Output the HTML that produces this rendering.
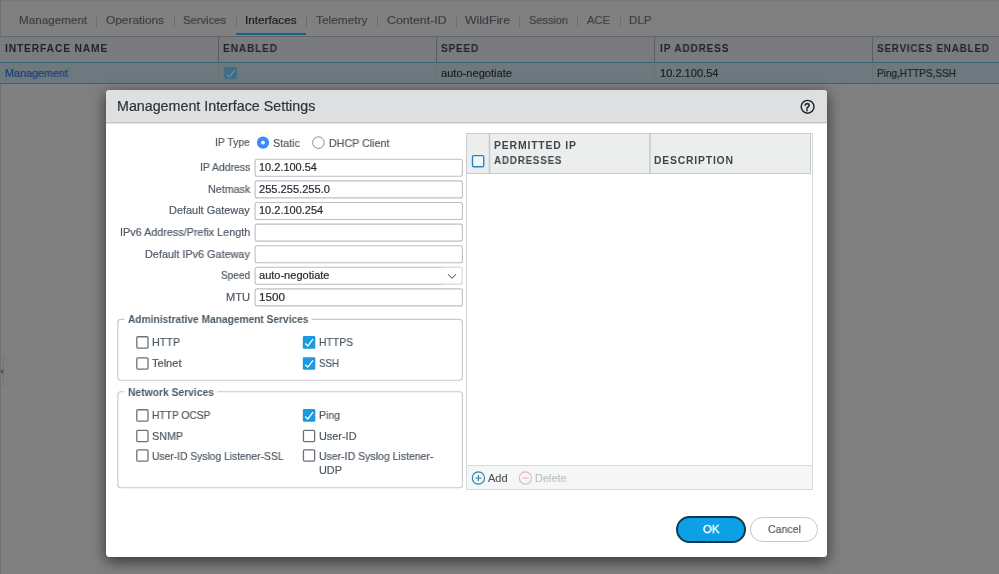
<!DOCTYPE html>
<html lang="en"><head><meta charset="utf-8"><title>Management Interface Settings</title>
<style>
html,body{margin:0;padding:0}
body{width:999px;height:574px;overflow:hidden;position:relative;background:#808080;font-family:"Liberation Sans",sans-serif;font-size:11px}
.a{position:absolute;box-sizing:border-box}
.t{position:absolute;white-space:pre;transform-origin:0 50%;display:block;will-change:transform}
.topline{left:0;top:0;width:999px;height:2px;background:linear-gradient(#787878 0,#787878 1px,#7e7e7e 1px,#7e7e7e 2px)}
.leftline{left:0;top:0;width:1px;height:574px;background:#707272}
.handle{left:1px;top:356px;width:3px;height:31px;background:#7e7e7e;border:1px solid #767878;border-left:0}
.sep{top:15.5px;width:1px;height:11px;background:#6a6d71}
.tabul{left:236px;top:32.5px;width:69.5px;height:2px;background:#17618b}
.thead{left:0;top:36px;width:999px;height:26px;background:#797b7d;border-top:1px solid #616569}
.vline{top:37px;width:1px;height:25px;background:#5b5f62}
.trow{left:0;top:62px;width:999px;height:22px;background:#6d797f;border-top:1px solid #3a657d;border-bottom:1px solid #3a657d}
.rline{top:63px;width:1px;height:20px;background:#687378}
.dlg{left:106px;top:90px;width:720.6px;height:466.6px;background:#fff;border-radius:3.5px;box-shadow:0 4px 14px 1px rgba(0,0,0,.55)}
.dhead{left:0;top:0;width:100%;height:32.5px;background:#dddfe1;border-radius:3.5px 3.5px 0 0}
.grid{left:466px;top:132.5px;width:347px;height:357px;border:1px solid #d6d9db;background:#fff}
.ghead{left:466px;top:132.5px;width:345px;height:41px;background:#eceeee;border:1px solid #c9cccd}
.gfoot{left:467px;top:465px;width:345px;height:23.5px;background:#f5f7f7;border-top:1px solid #d6d9db}
.ok{left:676.2px;top:516.2px;width:69.7px;height:26.8px;border-radius:14px;background:#0ea0e6;border:2px solid #0e3a52}
.cancel{left:750px;top:517.4px;width:67.8px;height:24.4px;border-radius:13px;background:#fff;border:1px solid #c4c8cb}

</style></head>
<body>
<div class="a topline"></div>
<div class="a leftline"></div>
<div class="a sep" style="left:96.0px"></div>
<div class="a sep" style="left:173.5px"></div>
<div class="a sep" style="left:236.3px"></div>
<div class="a sep" style="left:305.9px"></div>
<div class="a sep" style="left:377.0px"></div>
<div class="a sep" style="left:455.9px"></div>
<div class="a sep" style="left:518.8px"></div>
<div class="a sep" style="left:577.1px"></div>
<div class="a sep" style="left:619.5px"></div>
<div class="a tabul"></div>
<div class="a thead"></div>
<div class="a vline" style="left:218px"></div>
<div class="a vline" style="left:436px"></div>
<div class="a vline" style="left:654px"></div>
<div class="a vline" style="left:872px"></div>
<div class="a trow"></div>
<div class="a rline" style="left:218px"></div>
<div class="a rline" style="left:436px"></div>
<div class="a rline" style="left:654px"></div>
<div class="a rline" style="left:872px"></div>
<div class="a handle"></div>
<div class="a dlg"><div class="a dhead"></div></div>
<div class="a grid"></div>
<div class="a ghead"></div>
<div class="a gfoot"></div>
<div class="a ok"></div>
<div class="a cancel"></div>
<svg class="a" style="left:0;top:0" width="999" height="574" viewBox="0 0 999 574">
<path d="M0.3 371.5 L3.2 369 L3.2 374 Z" fill="#4f4f4f"/>
<rect x="224.3" y="66.9" width="12.6" height="12.4" rx="1.3" fill="#3e6d85"/>
<path d="M227 74.6 L229.5 76.9 L234.9 69.9" fill="none" stroke="#7f9fae" stroke-width="1"/>
<rect x="106" y="122.1" width="720.6" height="1.4" fill="#c2c5c8"/>
<circle cx="807.6" cy="106.8" r="6.4" fill="none" stroke="#1d1f22" stroke-width="1.4"/>
<circle cx="263" cy="142.6" r="6.1" fill="#3b8cf5"/><circle cx="263" cy="142.6" r="1.9" fill="#fff"/>
<circle cx="318.4" cy="142.6" r="5.8" fill="#fff" stroke="#8c8c8c" stroke-width="1"/>
<rect x="255.1" y="159.30" width="207.3" height="17" rx="2" fill="#fff" stroke="#bbbfc3" stroke-width="1.1"/>
<rect x="255.1" y="180.90" width="207.3" height="17" rx="2" fill="#fff" stroke="#bbbfc3" stroke-width="1.1"/>
<rect x="255.1" y="202.50" width="207.3" height="17" rx="2" fill="#fff" stroke="#bbbfc3" stroke-width="1.1"/>
<rect x="255.1" y="224.10" width="207.3" height="17" rx="2" fill="#fff" stroke="#bbbfc3" stroke-width="1.1"/>
<rect x="255.1" y="245.70" width="207.3" height="17" rx="2" fill="#fff" stroke="#bbbfc3" stroke-width="1.1"/>
<rect x="255.1" y="267.30" width="207.3" height="17" rx="2" fill="#fff" stroke="#bbbfc3" stroke-width="1.1"/>
<rect x="255.1" y="288.90" width="207.3" height="17" rx="2" fill="#fff" stroke="#bbbfc3" stroke-width="1.1"/>
<path d="M444.5 267.3 H460.4 Q462.4 267.3 462.4 269.3 V282.3 Q462.4 284.3 460.4 284.3 H444.5" fill="none" stroke="#dfe2e4" stroke-width="1.3"/>
<path d="M447.9 274.1 L451.9 278.2 L456 274.1" fill="none" stroke="#747d84" stroke-width="1.05"/>
<path d="M124.5 319.4 H120.8 Q117.8 319.4 117.8 322.4 V377.2 Q117.8 380.2 120.8 380.2 H459.4 Q462.4 380.2 462.4 377.2 V322.4 Q462.4 319.4 459.4 319.4 H311.5" fill="none" stroke="#c6cacd" stroke-width="1.1"/>
<path d="M124.5 391.7 H120.8 Q117.8 391.7 117.8 394.7 V484.8 Q117.8 487.8 120.8 487.8 H459.4 Q462.4 487.8 462.4 484.8 V394.7 Q462.4 391.7 459.4 391.7 H217" fill="none" stroke="#c6cacd" stroke-width="1.1"/>
<rect x="136.8" y="336.75" width="11.2" height="11.3" rx="1.1" fill="#fff" stroke="#6b727b" stroke-width="1.3"/>
<rect x="136.8" y="357.84999999999997" width="11.2" height="11.3" rx="1.1" fill="#fff" stroke="#6b727b" stroke-width="1.3"/>
<rect x="302.8" y="336.1" width="12.5" height="12.6" rx="1.3" fill="#1a9ae0"/>
<path d="M305.24 343.60 L307.85 346.00 L313.00 339.20" fill="none" stroke="#fff" stroke-width="1.3"/>
<rect x="302.8" y="357.2" width="12.5" height="12.6" rx="1.3" fill="#1a9ae0"/>
<path d="M305.24 364.70 L307.85 367.10 L313.00 360.30" fill="none" stroke="#fff" stroke-width="1.3"/>
<rect x="136.8" y="409.75" width="11.2" height="11.3" rx="1.1" fill="#fff" stroke="#6b727b" stroke-width="1.3"/>
<rect x="136.8" y="430.34999999999997" width="11.2" height="11.3" rx="1.1" fill="#fff" stroke="#6b727b" stroke-width="1.3"/>
<rect x="136.8" y="449.84999999999997" width="11.2" height="11.3" rx="1.1" fill="#fff" stroke="#6b727b" stroke-width="1.3"/>
<rect x="302.8" y="409.1" width="12.5" height="12.6" rx="1.3" fill="#1a9ae0"/>
<path d="M305.24 416.60 L307.85 419.00 L313.00 412.20" fill="none" stroke="#fff" stroke-width="1.3"/>
<rect x="303.45" y="430.34999999999997" width="11.2" height="11.3" rx="1.1" fill="#fff" stroke="#6b727b" stroke-width="1.3"/>
<rect x="303.45" y="449.84999999999997" width="11.2" height="11.3" rx="1.1" fill="#fff" stroke="#6b727b" stroke-width="1.3"/>
<rect x="488.8" y="133.5" width="1.4" height="39.5" fill="#c4c7c9"/>
<rect x="649.3" y="133.5" width="1.4" height="39.5" fill="#c4c7c9"/>
<rect x="472.5" y="155.6" width="11.2" height="11.2" rx="1.3" fill="#f3f6f7" stroke="#2387bd" stroke-width="1.4"/>
<circle cx="478.4" cy="478" r="6.1" fill="none" stroke="#2a7fa8" stroke-width="1.1"/><path d="M478.4 474.9 V481.1 M475.3 478 H481.5" stroke="#2a7fa8" stroke-width="1.1" fill="none"/>
<circle cx="525.4" cy="478" r="6.1" fill="none" stroke="#eab3b3" stroke-width="1.1"/><path d="M522.2 478 H528.6" stroke="#eab3b3" stroke-width="1.1" fill="none"/>
</svg>
<span class="t" style="left:18.53px;top:12.45px;font-size:11.7px;line-height:15px;font-weight:400;color:#3a3f46;-webkit-text-stroke:0.2px #3a3f46;transform:scaleX(0.9973)">Management</span>
<span class="t" style="left:105.53px;top:12.45px;font-size:11.7px;line-height:15px;font-weight:400;color:#3a3f46;-webkit-text-stroke:0.2px #3a3f46;transform:scaleX(1.0154)">Operations</span>
<span class="t" style="left:183.03px;top:12.45px;font-size:11.7px;line-height:15px;font-weight:400;color:#3a3f46;-webkit-text-stroke:0.2px #3a3f46;transform:scaleX(0.9604)">Services</span>
<span class="t" style="left:245.28px;top:12.45px;font-size:11.7px;line-height:15px;font-weight:400;color:#1c1c1c;-webkit-text-stroke:0.2px #1c1c1c;transform:scaleX(1.0044)">Interfaces</span>
<span class="t" style="left:315.78px;top:12.45px;font-size:11.7px;line-height:15px;font-weight:400;color:#3a3f46;-webkit-text-stroke:0.2px #3a3f46;transform:scaleX(1.0174)">Telemetry</span>
<span class="t" style="left:386.53px;top:12.45px;font-size:11.7px;line-height:15px;font-weight:400;color:#3a3f46;-webkit-text-stroke:0.2px #3a3f46;transform:scaleX(1.0537)">Content-ID</span>
<span class="t" style="left:464.53px;top:12.45px;font-size:11.7px;line-height:15px;font-weight:400;color:#3a3f46;-webkit-text-stroke:0.2px #3a3f46;transform:scaleX(1.0512)">WildFire</span>
<span class="t" style="left:528.53px;top:12.45px;font-size:11.7px;line-height:15px;font-weight:400;color:#3a3f46;-webkit-text-stroke:0.2px #3a3f46;transform:scaleX(0.9389)">Session</span>
<span class="t" style="left:586.53px;top:12.45px;font-size:11.7px;line-height:15px;font-weight:400;color:#3a3f46;-webkit-text-stroke:0.2px #3a3f46;transform:scaleX(0.9587)">ACE</span>
<span class="t" style="left:628.78px;top:12.45px;font-size:11.7px;line-height:15px;font-weight:400;color:#3a3f46;-webkit-text-stroke:0.2px #3a3f46;transform:scaleX(0.9913)">DLP</span>
<span class="t" style="left:5.09px;top:42.03px;font-size:10.3px;line-height:13px;font-weight:700;color:#1f242d;letter-spacing:0.8px;transform:scaleX(1.0048)">INTERFACE NAME</span>
<span class="t" style="left:223.34px;top:42.03px;font-size:10.3px;line-height:13px;font-weight:700;color:#1f242d;letter-spacing:0.8px;transform:scaleX(0.9881)">ENABLED</span>
<span class="t" style="left:440.84px;top:42.03px;font-size:10.3px;line-height:13px;font-weight:700;color:#1f242d;letter-spacing:0.8px;transform:scaleX(0.9752)">SPEED</span>
<span class="t" style="left:659.59px;top:42.03px;font-size:10.3px;line-height:13px;font-weight:700;color:#1f242d;letter-spacing:0.8px;transform:scaleX(0.9835)">IP ADDRESS</span>
<span class="t" style="left:876.59px;top:42.03px;font-size:10.3px;line-height:13px;font-weight:700;color:#1f242d;letter-spacing:0.8px;transform:scaleX(0.9605)">SERVICES ENABLED</span>
<span class="t" style="left:5.06px;top:66.12px;font-size:10.9px;line-height:14px;font-weight:400;color:#173f7c;-webkit-text-stroke:0.2px #173f7c;transform:scaleX(0.9906)">Management</span>
<span class="t" style="left:440.81px;top:66.12px;font-size:10.9px;line-height:14px;font-weight:400;color:#1e1e1e;-webkit-text-stroke:0.2px #1e1e1e;transform:scaleX(1.0192)">auto-negotiate</span>
<span class="t" style="left:659.56px;top:66.12px;font-size:10.9px;line-height:14px;font-weight:400;color:#1e1e1e;-webkit-text-stroke:0.2px #1e1e1e;transform:scaleX(1.0162)">10.2.100.54</span>
<span class="t" style="left:876.81px;top:66.12px;font-size:10.9px;line-height:14px;font-weight:400;color:#1e1e1e;-webkit-text-stroke:0.2px #1e1e1e;transform:scaleX(0.9189)">Ping,HTTPS,SSH</span>
<span class="t" style="left:116.93px;top:96.98px;font-size:14.2px;line-height:18px;font-weight:400;color:#2f3338;-webkit-text-stroke:0.2px #2f3338;transform:scaleX(1.0056)">Management Interface Settings</span>
<span class="t" style="left:804.48px;top:101.10px;font-size:10.4px;line-height:14px;font-weight:700;color:#1d1f22;-webkit-text-stroke:0.3px #1d1f22;transform:scaleX(0.9963)">?</span>
<span class="t" style="left:215.06px;top:134.72px;font-size:10.9px;line-height:14px;font-weight:400;color:#505a64;-webkit-text-stroke:0.2px #505a64;transform:scaleX(0.9517)">IP Type</span>
<span class="t" style="left:199.56px;top:160.47px;font-size:10.9px;line-height:14px;font-weight:400;color:#505a64;-webkit-text-stroke:0.2px #505a64;transform:scaleX(0.9580)">IP Address</span>
<span class="t" style="left:207.56px;top:182.07px;font-size:10.9px;line-height:14px;font-weight:400;color:#505a64;-webkit-text-stroke:0.2px #505a64;transform:scaleX(0.9840)">Netmask</span>
<span class="t" style="left:169.06px;top:202.67px;font-size:10.9px;line-height:14px;font-weight:400;color:#505a64;-webkit-text-stroke:0.2px #505a64;transform:scaleX(1.0033)">Default Gateway</span>
<span class="t" style="left:119.56px;top:225.27px;font-size:10.9px;line-height:14px;font-weight:400;color:#505a64;-webkit-text-stroke:0.2px #505a64;transform:scaleX(0.9917)">IPv6 Address/Prefix Length</span>
<span class="t" style="left:145.06px;top:246.87px;font-size:10.9px;line-height:14px;font-weight:400;color:#505a64;-webkit-text-stroke:0.2px #505a64;transform:scaleX(0.9948)">Default IPv6 Gateway</span>
<span class="t" style="left:220.81px;top:268.47px;font-size:10.9px;line-height:14px;font-weight:400;color:#505a64;-webkit-text-stroke:0.2px #505a64;transform:scaleX(0.9216)">Speed</span>
<span class="t" style="left:225.81px;top:290.07px;font-size:10.9px;line-height:14px;font-weight:400;color:#505a64;-webkit-text-stroke:0.2px #505a64;transform:scaleX(1.0185)">MTU</span>
<span class="t" style="left:258.81px;top:160.47px;font-size:10.9px;line-height:14px;font-weight:400;color:#282b30;-webkit-text-stroke:0.2px #282b30;transform:scaleX(1.0075)">10.2.100.54</span>
<span class="t" style="left:258.81px;top:182.07px;font-size:10.9px;line-height:14px;font-weight:400;color:#282b30;-webkit-text-stroke:0.2px #282b30;transform:scaleX(1.0190)">255.255.255.0</span>
<span class="t" style="left:258.81px;top:202.67px;font-size:10.9px;line-height:14px;font-weight:400;color:#282b30;-webkit-text-stroke:0.2px #282b30;transform:scaleX(1.0100)">10.2.100.254</span>
<span class="t" style="left:258.81px;top:268.47px;font-size:10.9px;line-height:14px;font-weight:400;color:#282b30;-webkit-text-stroke:0.2px #282b30;transform:scaleX(1.0121)">auto-negotiate</span>
<span class="t" style="left:258.81px;top:290.07px;font-size:10.9px;line-height:14px;font-weight:400;color:#282b30;-webkit-text-stroke:0.2px #282b30;transform:scaleX(1.0721)">1500</span>
<span class="t" style="left:272.76px;top:135.92px;font-size:10.9px;line-height:14px;font-weight:400;color:#505a64;-webkit-text-stroke:0.2px #505a64;transform:scaleX(0.9865)">Static</span>
<span class="t" style="left:328.56px;top:135.92px;font-size:10.9px;line-height:14px;font-weight:400;color:#505a64;-webkit-text-stroke:0.2px #505a64;transform:scaleX(0.9813)">DHCP Client</span>
<span class="t" style="left:493.99px;top:138.93px;font-size:10.3px;line-height:13px;font-weight:700;color:#3f464b;letter-spacing:0.8px;transform:scaleX(1.0141)">PERMITTED IP</span>
<span class="t" style="left:493.99px;top:153.63px;font-size:10.3px;line-height:13px;font-weight:700;color:#3f464b;letter-spacing:0.8px;transform:scaleX(0.9579)">ADDRESSES</span>
<span class="t" style="left:654.09px;top:153.63px;font-size:10.3px;line-height:13px;font-weight:700;color:#3f464b;letter-spacing:0.8px;transform:scaleX(1.0071)">DESCRIPTION</span>
<span class="t" style="left:127.56px;top:312.22px;font-size:10.9px;line-height:14px;font-weight:700;color:#4a5b67;transform:scaleX(0.9347)">Administrative Management Services</span>
<span class="t" style="left:127.56px;top:385.02px;font-size:10.9px;line-height:14px;font-weight:700;color:#4a5b67;transform:scaleX(0.9468)">Network Services</span>
<span class="t" style="left:152.06px;top:335.22px;font-size:10.9px;line-height:14px;font-weight:400;color:#4d5761;-webkit-text-stroke:0.2px #4d5761;transform:scaleX(0.9839)">HTTP</span>
<span class="t" style="left:152.06px;top:356.22px;font-size:10.9px;line-height:14px;font-weight:400;color:#4d5761;-webkit-text-stroke:0.2px #4d5761;transform:scaleX(1.0144)">Telnet</span>
<span class="t" style="left:318.56px;top:335.22px;font-size:10.9px;line-height:14px;font-weight:400;color:#4d5761;-webkit-text-stroke:0.2px #4d5761;transform:scaleX(0.9518)">HTTPS</span>
<span class="t" style="left:318.56px;top:356.22px;font-size:10.9px;line-height:14px;font-weight:400;color:#4d5761;-webkit-text-stroke:0.2px #4d5761;transform:scaleX(0.8918)">SSH</span>
<span class="t" style="left:152.06px;top:408.22px;font-size:10.9px;line-height:14px;font-weight:400;color:#4d5761;-webkit-text-stroke:0.2px #4d5761;transform:scaleX(0.9411)">HTTP OCSP</span>
<span class="t" style="left:152.06px;top:429.22px;font-size:10.9px;line-height:14px;font-weight:400;color:#4d5761;-webkit-text-stroke:0.2px #4d5761;transform:scaleX(0.9845)">SNMP</span>
<span class="t" style="left:152.06px;top:448.72px;font-size:10.9px;line-height:14px;font-weight:400;color:#4d5761;-webkit-text-stroke:0.2px #4d5761;transform:scaleX(0.9444)">User-ID Syslog Listener-SSL</span>
<span class="t" style="left:318.56px;top:408.22px;font-size:10.9px;line-height:14px;font-weight:400;color:#4d5761;-webkit-text-stroke:0.2px #4d5761;transform:scaleX(0.9619)">Ping</span>
<span class="t" style="left:318.56px;top:429.22px;font-size:10.9px;line-height:14px;font-weight:400;color:#4d5761;-webkit-text-stroke:0.2px #4d5761;transform:scaleX(0.9991)">User-ID</span>
<span class="t" style="left:318.56px;top:448.72px;font-size:10.9px;line-height:14px;font-weight:400;color:#4d5761;-webkit-text-stroke:0.2px #4d5761;transform:scaleX(0.9651)">User-ID Syslog Listener-</span>
<span class="t" style="left:318.56px;top:462.72px;font-size:10.9px;line-height:14px;font-weight:400;color:#4d5761;-webkit-text-stroke:0.2px #4d5761;transform:scaleX(0.9992)">UDP</span>
<span class="t" style="left:487.76px;top:471.22px;font-size:10.9px;line-height:14px;font-weight:400;color:#4c5156;-webkit-text-stroke:0.1px #4c5156;transform:scaleX(1.0098)">Add</span>
<span class="t" style="left:535.16px;top:471.22px;font-size:10.9px;line-height:14px;font-weight:400;color:#bfc2c4;-webkit-text-stroke:0.2px #bfc2c4;transform:scaleX(1.0062)">Delete</span>
<span class="t" style="left:702.84px;top:520.78px;font-size:11.6px;line-height:15px;font-weight:400;color:#fff;-webkit-text-stroke:0.35px #fff;transform:scaleX(0.9808)">OK</span>
<span class="t" style="left:767.76px;top:521.52px;font-size:10.9px;line-height:14px;font-weight:400;color:#555a5f;-webkit-text-stroke:0.2px #555a5f;transform:scaleX(0.9698)">Cancel</span>
</body></html>
